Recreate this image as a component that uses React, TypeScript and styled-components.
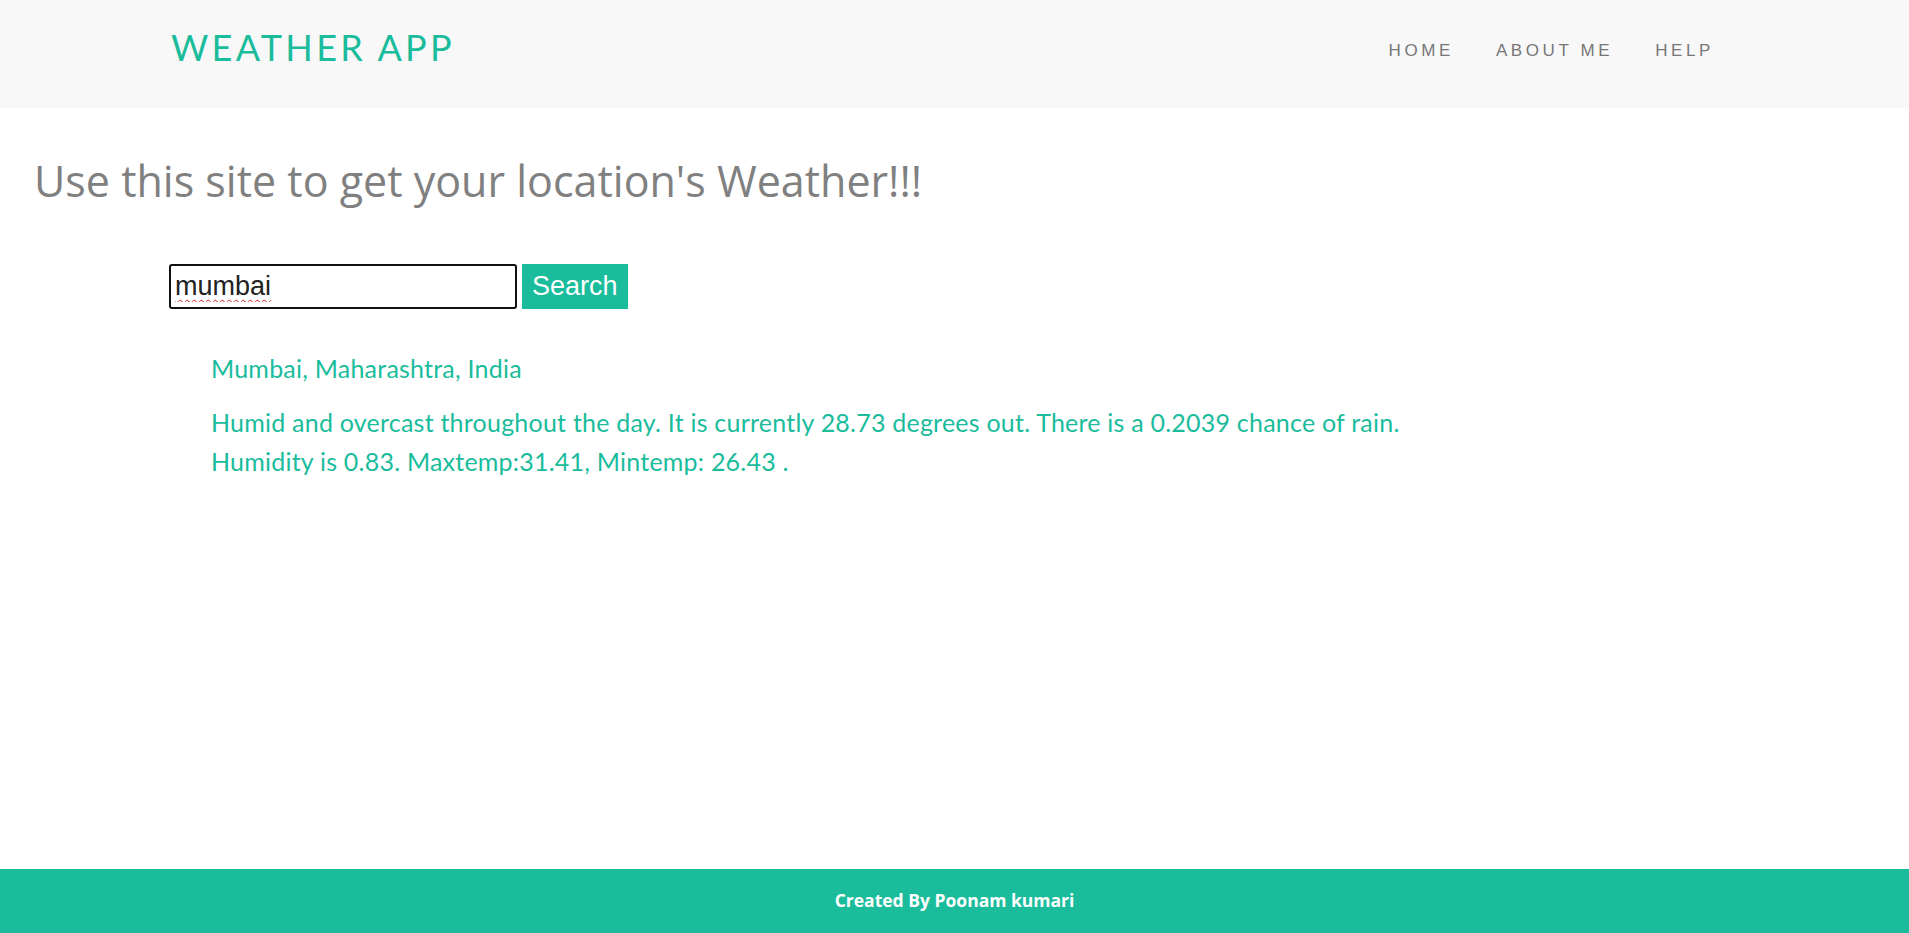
import React from "react";
import styled, { createGlobalStyle } from "styled-components";

const GlobalStyle = createGlobalStyle`
  html, body { margin: 0; padding: 0; background: #ffffff; }
  #root { min-height: 100vh; }
`;

const Page = styled.div`
  min-height: 100vh;
  display: flex;
  flex-direction: column;
`;

const Header = styled.header`
  height: 108px;
  background: #f8f8f8;
  display: flex;
  align-items: center;
  justify-content: space-between;
  padding: 0 171px 0 171px;
  box-sizing: border-box;
`;

const Brand = styled.a`
  font-family: Lato, "Open Sans", sans-serif;
  font-size: 36px;
  letter-spacing: 3.3px;
  color: #1abc9c;
  text-decoration: none;
  line-height: 1;
  margin-top: -14px;
`;

const Nav = styled.nav`
  display: flex;
  align-items: center;
  margin-top: -6px;
`;

const NavLink = styled.a`
  font-family: "Liberation Sans", Arial, sans-serif;
  font-size: 17px;
  letter-spacing: 3.6px;
  color: #777777;
  text-decoration: none;
  padding: 0 21px;
  &:last-child { padding-right: 24px; }
`;

const Main = styled.main`
  flex: 1;
  display: flex;
  flex-direction: column;
`;

const Heading = styled.h1`
  font-family: "Comic Sans MS", "Open Sans", sans-serif;
  font-weight: 400;
  font-size: 43px;
  line-height: 44px;
  color: #808080;
  margin: 51px 0 0 34px;
`;

const SearchRow = styled.form`
  display: flex;
  gap: 5px;
  margin: 61px 0 0 169px;
`;

const Input = styled.input`
  width: 348px;
  height: 45px;
  box-sizing: border-box;
  border: 2px solid #111111;
  border-radius: 3px;
  padding: 0 4px;
  font-family: "Liberation Sans", Arial, sans-serif;
  font-size: 27px;
  color: #222222;
  outline: none;
  text-decoration: underline wavy #e02020;
  text-decoration-thickness: 1px;
  text-underline-offset: 4px;
`;

const SearchButton = styled.button`
  height: 45px;
  padding: 0 10px;
  border: none;
  border-radius: 0;
  background: #1abc9c;
  color: #ffffff;
  font-family: "Liberation Sans", Arial, sans-serif;
  font-size: 27px;
  cursor: pointer;
`;

const Results = styled.section`
  margin: 44px 0 0 211px;
  font-family: Lato, "Open Sans", sans-serif;
  color: #1abc9c;
  font-size: 25px;
  letter-spacing: 0.22px;
`;

const Place = styled.div`
  line-height: 30px;
`;

const Summary = styled.p`
  margin: 20px 0 0 0;
  line-height: 39px;
`;

const Footer = styled.footer`
  height: 64px;
  background: #1abc9c;
  display: flex;
  align-items: center;
  justify-content: center;
  font-family: "Comic Sans MS", "Open Sans", sans-serif;
  font-weight: 700;
  font-size: 17.5px;
  color: #ffffff;
  padding-bottom: 2px;
  box-sizing: border-box;
`;

export default function App() {
  return (
    <>
      <GlobalStyle />
      <Page>
        <Header>
          <Brand href="#">WEATHER APP</Brand>
          <Nav>
            <NavLink href="#">HOME</NavLink>
            <NavLink href="#">ABOUT ME</NavLink>
            <NavLink href="#">HELP</NavLink>
          </Nav>
        </Header>
        <Main>
          <Heading>Use this site to get your location's Weather!!!</Heading>
          <SearchRow onSubmit={(e) => e.preventDefault()}>
            <Input type="text" defaultValue="mumbai" spellCheck={false} />
            <SearchButton type="submit">Search</SearchButton>
          </SearchRow>
          <Results>
            <Place>Mumbai, Maharashtra, India</Place>
            <Summary>
              Humid and overcast throughout the day. It is currently 28.73 degrees out. There is a 0.2039 chance of rain.
              <br />
              Humidity is 0.83. Maxtemp:31.41, Mintemp: 26.43 .
            </Summary>
          </Results>
        </Main>
        <Footer>Created By Poonam kumari</Footer>
      </Page>
    </>
  );
}
